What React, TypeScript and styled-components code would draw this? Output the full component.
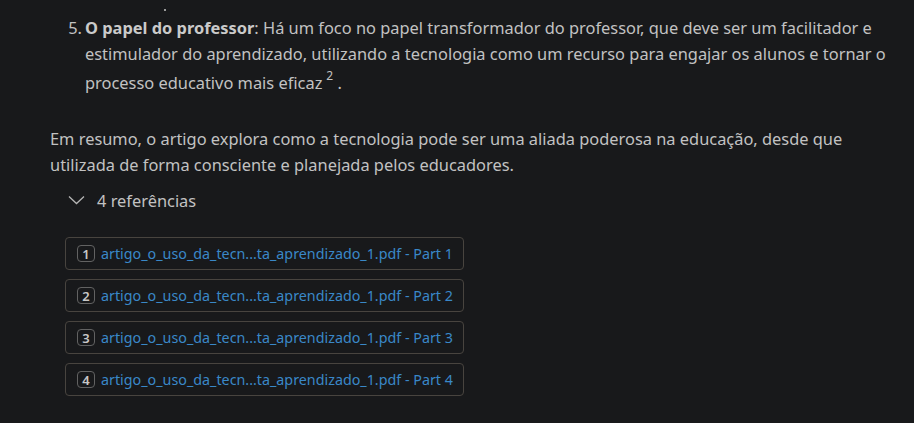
import React from "react";
import styled, { createGlobalStyle } from "styled-components";

const Global = createGlobalStyle`
  html, body { margin: 0; padding: 0; background: #18191b; }
  body { font-family: "Noto Sans", "Open Sans", sans-serif; color: #c2c2c2; }
`;

const Page = styled.div`
  width: 914px;
  height: 423px;
  overflow: hidden;
  background: #18191b;
  box-sizing: border-box;
  padding: 0 20px 0 50px;
  position: relative;
`;

const Speck = styled.span`
  position: absolute;
  left: 164px;
  top: 9px;
  width: 2px;
  height: 2px;
  background: #9a9a9a;
`;

const List = styled.ol`
  list-style: none;
  margin: 0;
  padding: 15px 0 0 0;
`;

const Item = styled.li`
  display: grid;
  grid-template-columns: 35px 1fr;
  font-size: 16.4px;
  line-height: 26px;
`;

const Marker = styled.span`
  text-align: right;
  padding-right: 3px;
`;

const Strong = styled.strong`
  font-weight: 700;
  color: #cacaca;
`;

const Sup = styled.sup`
  font-size: 12px;
  line-height: 18px;
  vertical-align: 9px;
  margin-left: 4px;
`;

const Para = styled.p`
  margin: 30px 0 0 0;
  max-width: 800px;
  font-size: 16.4px;
  line-height: 26px;
`;

const Toggle = styled.div`
  display: flex;
  align-items: center;
  gap: 12px;
  margin: 10px 0 0 18px;
  height: 24px;
  font-size: 16.4px;
`;

const Refs = styled.div`
  display: flex;
  flex-direction: column;
  align-items: flex-start;
  gap: 9px;
  margin: 25px 0 0 15px;
`;

const RefBox = styled.a`
  display: flex;
  align-items: center;
  gap: 6px;
  height: 31px;
  padding: 0 10px 0 11px;
  border: 1px solid #48443f;
  border-radius: 4px;
  text-decoration: none;
  color: #3a88c8;
  font-size: 14.3px;
`;

const Badge = styled.span`
  display: inline-flex;
  align-items: center;
  justify-content: center;
  width: 16px;
  height: 15px;
  border: 1px solid #626262;
  border-radius: 4px;
  color: #c8c8c8;
  font-size: 13px;
  font-weight: 600;
`;

const refs = [1, 2, 3, 4];

export default function App() {
  return (
    <Page>
      <Global />
      <Speck />
      <List>
        <Item>
          <Marker>5.</Marker>
          <span>
            <Strong>O papel do professor</Strong>: Há um foco no papel transformador do professor, que deve ser um
            facilitador e estimulador do aprendizado, utilizando a tecnologia como um recurso para engajar os alunos e
            tornar o processo educativo mais eficaz<Sup>2</Sup> .
          </span>
        </Item>
      </List>
      <Para>
        Em resumo, o artigo explora como a tecnologia pode ser uma aliada poderosa na educação, desde que utilizada de
        forma consciente e planejada pelos educadores.
      </Para>
      <Toggle>
        <svg width="17" height="10" viewBox="0 0 17 10" fill="none">
          <path d="M1 1.5 L8.5 8.5 L16 1.5" stroke="#b5b5b5" strokeWidth="1.3" />
        </svg>
        <span>4 referências</span>
      </Toggle>
      <Refs>
        {refs.map((n) => (
          <RefBox key={n} href="#">
            <Badge>{n}</Badge>
            <span>artigo_o_uso_da_tecn...ta_aprendizado_1.pdf - Part {n}</span>
          </RefBox>
        ))}
      </Refs>
    </Page>
  );
}
